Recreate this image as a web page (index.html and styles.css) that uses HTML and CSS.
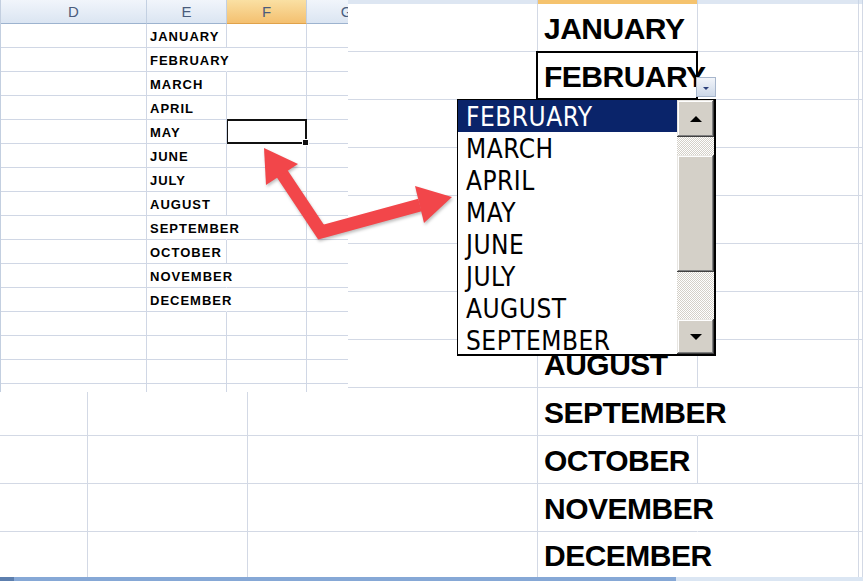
FILE: index.html
```html
<!DOCTYPE html>
<html>
<head>
<meta charset="utf-8">
<link rel="stylesheet" href="styles.css">
</head>
<body>
<div class="stage">
  <div class="big">
    <div class="bh"></div><div class="bh"></div><div class="bh"></div><div class="bh on"></div><div class="bh"></div><div class="bh"></div>
    <div class="c"></div><div class="c"></div><div class="c"></div><div class="c t">JANUARY</div><div class="c"></div><div class="c"></div>
    <div class="c"></div><div class="c"></div><div class="c"></div><div class="c t ov sel">FEBRUARY</div><div class="c"></div><div class="c"></div>
    <div class="c"></div><div class="c"></div><div class="c"></div><div class="c"></div><div class="c"></div><div class="c"></div>
    <div class="c"></div><div class="c"></div><div class="c"></div><div class="c"></div><div class="c"></div><div class="c"></div>
    <div class="c"></div><div class="c"></div><div class="c"></div><div class="c"></div><div class="c"></div><div class="c"></div>
    <div class="c"></div><div class="c"></div><div class="c"></div><div class="c"></div><div class="c"></div><div class="c"></div>
    <div class="c"></div><div class="c"></div><div class="c"></div><div class="c"></div><div class="c"></div><div class="c"></div>
    <div class="c"></div><div class="c"></div><div class="c"></div><div class="c t">AUGUST</div><div class="c"></div><div class="c"></div>
    <div class="c"></div><div class="c"></div><div class="c"></div><div class="c t ov">SEPTEMBER</div><div class="c"></div><div class="c"></div>
    <div class="c"></div><div class="c"></div><div class="c"></div><div class="c t">OCTOBER</div><div class="c"></div><div class="c"></div>
    <div class="c"></div><div class="c"></div><div class="c"></div><div class="c t ov">NOVEMBER</div><div class="c"></div><div class="c"></div>
    <div class="c last"></div><div class="c last"></div><div class="c last"></div><div class="c t ov last">DECEMBER</div><div class="c last"></div><div class="c last"></div>
    <div class="bar"><span class="bar-a"></span><span class="bar-b"></span><span class="bar-c"></span></div>
  </div>

  <div class="mini">
    <div class="mh">D</div><div class="mh">E</div><div class="mh on">F</div><div class="mh">G</div>
    <div class="m"></div><div class="m t">JANUARY</div><div class="m"></div><div class="m"></div>
    <div class="m"></div><div class="m t ov">FEBRUARY</div><div class="m"></div><div class="m"></div>
    <div class="m"></div><div class="m t">MARCH</div><div class="m"></div><div class="m"></div>
    <div class="m"></div><div class="m t">APRIL</div><div class="m"></div><div class="m"></div>
    <div class="m"></div><div class="m t">MAY</div><div class="m msel"></div><div class="m"></div>
    <div class="m"></div><div class="m t">JUNE</div><div class="m"></div><div class="m"></div>
    <div class="m"></div><div class="m t">JULY</div><div class="m"></div><div class="m"></div>
    <div class="m"></div><div class="m t">AUGUST</div><div class="m"></div><div class="m"></div>
    <div class="m"></div><div class="m t ov">SEPTEMBER</div><div class="m"></div><div class="m"></div>
    <div class="m"></div><div class="m t">OCTOBER</div><div class="m"></div><div class="m"></div>
    <div class="m"></div><div class="m t ov">NOVEMBER</div><div class="m"></div><div class="m"></div>
    <div class="m"></div><div class="m t ov">DECEMBER</div><div class="m"></div><div class="m"></div>
    <div class="m"></div><div class="m"></div><div class="m"></div><div class="m"></div>
    <div class="m"></div><div class="m"></div><div class="m"></div><div class="m"></div>
    <div class="m"></div><div class="m"></div><div class="m"></div><div class="m"></div>
    <div class="m end"></div><div class="m end"></div><div class="m end"></div><div class="m end"></div>
  </div>

  <svg class="arrow" width="863" height="581" viewBox="0 0 863 581">
    <g fill="#f2464a" stroke="none">
      <polyline points="281,172 321,232 420,205" fill="none" stroke="#f2464a" stroke-width="13" stroke-linejoin="miter"/>
      <polygon points="264,148 266,185 298,164"/>
      <polygon points="452,197 415,186 424,223"/>
    </g>
  </svg>

  <div class="ddbtn"><span class="ddtri"></span></div>

  <div class="listbox">
    <div class="items">
      <div class="item hi">FEBRUARY</div>
      <div class="item">MARCH</div>
      <div class="item">APRIL</div>
      <div class="item">MAY</div>
      <div class="item">JUNE</div>
      <div class="item">JULY</div>
      <div class="item">AUGUST</div>
      <div class="item">SEPTEMBER</div>
    </div>
    <div class="sb">
      <div class="sbtn up"><span class="tri-up"></span></div>
      <div class="track t1"></div>
      <div class="thumb"></div>
      <div class="track t2"></div>
      <div class="sbtn dn"><span class="tri-dn"></span></div>
    </div>
  </div>
</div>
</body>
</html>
```

FILE: styles.css
```css
html, body {
  margin: 0;
  padding: 0;
  background: #fff;
}
.stage {
  position: relative;
  width: 863px;
  height: 581px;
  overflow: hidden;
  background: #fff;
}

/* big zoomed sheet */
.big {
  display: grid;
  grid-template-columns: 88px 160px 290px 160px 161px 1fr;
  grid-template-rows: 4px repeat(11, 48px) 45px 4px;
  width: 863px;
  height: 581px;
}
.bh {
  background: #dde6f2;
  border-right: 1px solid #c9d5e6;
}
.bh.on {
  background: #f5c36e;
}
.c {
  border-right: 1px solid #d3d9e5;
  border-bottom: 1px solid #d3d9e5;
  box-sizing: border-box;
}
.c.last {
  border-bottom: none;
}
.c.t {
  display: flex;
  align-items: center;
  padding: 3px 0 0 6px;
  font-family: "Liberation Sans", Arial, sans-serif;
  font-weight: bold;
  font-size: 30px;
  letter-spacing: -0.5px;
  color: #000;
  white-space: nowrap;
  overflow: visible;
  position: relative;
  z-index: 1;
}
.c.ov {
  border-right-color: transparent;
}
.c.sel::after {
  content: "";
  position: absolute;
  left: -2px;
  top: -1px;
  right: -1px;
  bottom: -1px;
  border: 2px solid #000;
}
.bar {
  grid-column: 1 / -1;
  display: flex;
  background: #86a8d6;
}
.bar-a {
  width: 14px;
  background: #5d7fae;
}
.bar-b {
  flex: 1;
}
.bar-c {
  width: 187px;
  background: #dbe6f3;
}

/* small screenshot overlay */
.mini {
  position: absolute;
  left: 0;
  top: 0;
  width: 348px;
  height: 392px;
  display: grid;
  grid-template-columns: 146px 80px 80px 80px;
  grid-template-rows: 24px repeat(15, 24px) 8px;
  background: #fff;
  border-left: 1px solid #c3cfe0;
  box-sizing: border-box;
  overflow: hidden;
  z-index: 2;
}
.mh {
  display: flex;
  align-items: center;
  justify-content: center;
  background: linear-gradient(#f1f5fb, #dbe5f2);
  border-right: 1px solid #c3d0e2;
  border-bottom: 1px solid #9db3cf;
  box-sizing: border-box;
  font-family: "Liberation Sans", Arial, sans-serif;
  font-size: 15px;
  color: #4a5c7c;
}
.mh.on {
  background: linear-gradient(#fae0a3, #f4c070);
  border-bottom-color: #e0a24a;
}
.m {
  border-right: 1px solid #d0d7e5;
  border-bottom: 1px solid #d0d7e5;
  box-sizing: border-box;
}
.m.end {
  border-bottom: none;
}
.m.t {
  display: flex;
  align-items: center;
  padding: 1px 0 0 3px;
  font-family: "Liberation Sans", Arial, sans-serif;
  font-weight: bold;
  font-size: 13px;
  letter-spacing: 1px;
  color: #000;
  white-space: nowrap;
  position: relative;
  z-index: 1;
}
.m.ov {
  border-right-color: transparent;
}
.msel {
  position: relative;
}
.msel::after {
  content: "";
  position: absolute;
  left: -1px;
  top: -1px;
  right: -1px;
  bottom: -1px;
  border: 2px solid #111;
}
.msel::before {
  content: "";
  position: absolute;
  right: -3px;
  bottom: -3px;
  width: 5px;
  height: 5px;
  background: #111;
  border: 1px solid #fff;
  z-index: 1;
}

/* red arrow */
.arrow {
  position: absolute;
  left: 0;
  top: 0;
  z-index: 3;
  filter: drop-shadow(1px 2px 1.5px rgba(0, 0, 0, 0.25));
}

/* dropdown button */
.ddbtn {
  position: absolute;
  left: 696px;
  top: 77px;
  width: 20px;
  height: 20px;
  box-sizing: border-box;
  border: 1px solid #a7b6cc;
  background: linear-gradient(#f2f5fa, #cdd8e8);
  display: flex;
  align-items: center;
  justify-content: center;
  z-index: 4;
}
.ddtri {
  width: 0;
  height: 0;
  margin-top: 3px;
  border-left: 3px solid transparent;
  border-right: 3px solid transparent;
  border-top: 3px solid #2b3f7a;
}

/* list box */
.listbox {
  position: absolute;
  left: 457px;
  top: 99px;
  width: 259px;
  height: 257px;
  box-sizing: border-box;
  border: 1px solid #000;
  border-right-width: 2px;
  border-bottom-width: 2px;
  background: #fff;
  display: flex;
  z-index: 4;
  overflow: hidden;
}
.items {
  flex: 1;
  overflow: hidden;
}
.item {
  height: 32px;
  display: flex;
  align-items: center;
  padding: 1px 0 0 8px;
  box-sizing: border-box;
  font-family: "DejaVu Sans Condensed", "DejaVu Sans", sans-serif;
  font-stretch: condensed;
  font-size: 26px;
  letter-spacing: 0.5px;
  color: #000;
  white-space: nowrap;
}
.item.hi {
  background: #0a246a;
  color: #fff;
}
.sb {
  width: 37px;
  display: flex;
  flex-direction: column;
}
.sbtn, .thumb {
  background: #d4d0c8;
  box-shadow: inset -1px -1px #404040, inset 1px 1px #e8e6e2, inset -2px -2px #808080, inset 2px 2px #fff;
}
.sbtn {
  display: flex;
  align-items: center;
  justify-content: center;
}
.up {
  height: 37px;
}
.dn {
  height: 35px;
}
.thumb {
  height: 117px;
}
.track {
  background: repeating-conic-gradient(#d4d0c8 0 25%, #ffffff 0 50%) 0 0 / 2px 2px;
}
.t1 {
  height: 18px;
}
.t2 {
  flex: 1;
}
.tri-up {
  width: 0;
  height: 0;
  border-left: 6px solid transparent;
  border-right: 6px solid transparent;
  border-bottom: 6px solid #000;
}
.tri-dn {
  width: 0;
  height: 0;
  border-left: 6px solid transparent;
  border-right: 6px solid transparent;
  border-top: 6px solid #000;
}
```
